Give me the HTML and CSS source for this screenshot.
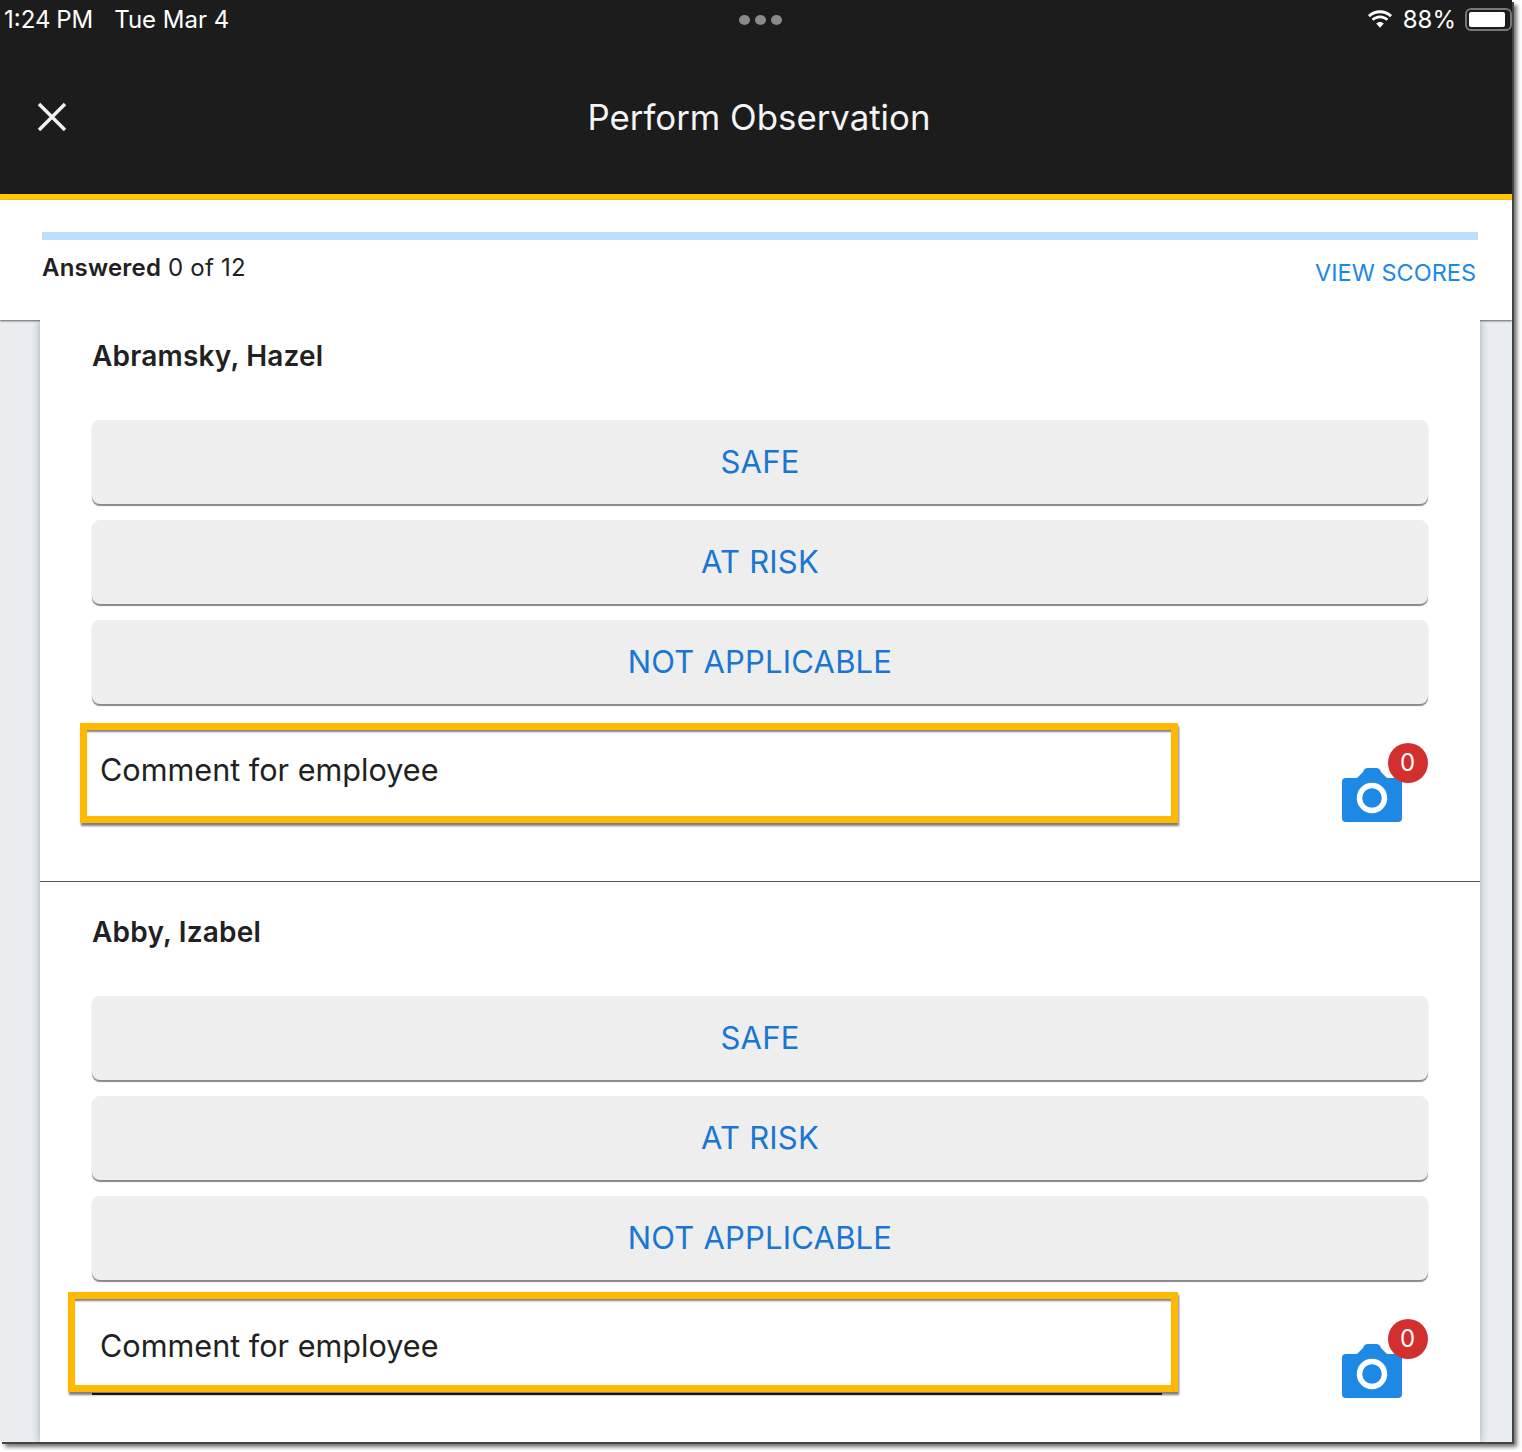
FILE: index.html
```html
<!DOCTYPE html>
<html lang="en">
<head>
<meta charset="utf-8">
<title>Perform Observation</title>
<link rel="stylesheet" href="styles.css">
</head>
<body>
<div class="screen">
  <header class="appbar">
    <div class="status">
      <div class="status-left"><span class="time">1:24 PM</span><span>Tue Mar 4</span></div>
      <div class="dots"><i></i><i></i><i></i></div>
      <div class="status-right">
        <svg class="wifi" width="28" height="20" viewBox="0 0 28 20"><path fill="#fff" d="M14 4.200c3.900 0 7.400 1.500 10.100 4l1.900-2.100C22.800 3.100 18.600 1.200 14 1.200S5.200 3.100 2 6.100l1.900 2.100c2.700-2.500 6.200-4 10.100-4zM14 9.300c2.500 0 4.700.9 6.500 2.500l1.900-2.100c-2.200-2-5.200-3.300-8.400-3.300s-6.200 1.300-8.400 3.300l1.900 2.100c1.800-1.600 4-2.500 6.500-2.500zM14 13c-1.400 0-2.800.6-3.800 1.500l3.800 4.300 3.800-4.300c-1-.9-2.400-1.500-3.800-1.500z"/></svg>
        <span>88%</span>
        <span class="battery"><span class="battery-fill"></span></span>
      </div>
    </div>
    <div class="titlebar">
      <svg class="close" width="30" height="30" viewBox="0 0 30 30"><path d="M2 2 L28 28 M28 2 L2 28" stroke="#f2f2f2" stroke-width="3.400" fill="none"/></svg>
      <h1>Perform Observation</h1>
    </div>
  </header>
  <section class="progress">
    <div class="bar"></div>
    <div class="progress-row">
      <div class="answered"><b>Answered</b> 0 of 12</div>
      <a class="scores">VIEW SCORES</a>
    </div>
  </section>
  <main class="content">
    <div class="card">
      <article class="person first">
        <h2>Abramsky, Hazel</h2>
        <div class="choices">
          <button class="choice">SAFE</button>
          <button class="choice">AT RISK</button>
          <button class="choice">NOT APPLICABLE</button>
        </div>
        <div class="comment-row">
          <div class="comment">Comment for employee</div>
          <div class="photo">
            <svg class="camera" width="60" height="54" viewBox="0 0 60 54"><path fill="#1e88e5" d="M4 10 H15 L21 4 Q22 0 26 0 H34 Q38 0 39 4 L45 10 H56 Q60 10 60 14 V50 Q60 54 56 54 H4 Q0 54 0 50 V14 Q0 10 4 10 Z"/><circle cx="30" cy="30" r="12.500" fill="none" stroke="#fff" stroke-width="5.500"/></svg>
            <span class="badge">0</span>
          </div>
          <div class="highlight highlight-a"></div>
        </div>
      </article>
      <article class="person second">
        <h2>Abby, Izabel</h2>
        <div class="choices">
          <button class="choice">SAFE</button>
          <button class="choice">AT RISK</button>
          <button class="choice">NOT APPLICABLE</button>
        </div>
        <div class="comment-row">
          <div class="comment lined">Comment for employee</div>
          <div class="photo">
            <svg class="camera" width="60" height="54" viewBox="0 0 60 54"><path fill="#1e88e5" d="M4 10 H15 L21 4 Q22 0 26 0 H34 Q38 0 39 4 L45 10 H56 Q60 10 60 14 V50 Q60 54 56 54 H4 Q0 54 0 50 V14 Q0 10 4 10 Z"/><circle cx="30" cy="30" r="12.500" fill="none" stroke="#fff" stroke-width="5.500"/></svg>
            <span class="badge">0</span>
          </div>
          <div class="highlight highlight-b"></div>
        </div>
      </article>
    </div>
  </main>
</div>
</body>
</html>
```
FILE: styles.css
```css
* { box-sizing: border-box; }
html, body { margin: 0; padding: 0; background: #fff; }
body { font-family: Inter, "Noto Sans", sans-serif; width: 1522px; height: 1452px; overflow: hidden; }
.screen {
  width: 1512px; height: 1442px; overflow: hidden; display: flex; flex-direction: column;
  background: #e9edf0;
  box-shadow: 2px 2px 0 #444, 5px 5px 4px rgba(0,0,0,.55);
}
.appbar { height: 200px; flex: none; background: #1c1c1c; border-bottom: 6px solid #ffc800; color: #fff; }
.status { height: 40px; padding: 0 0 2px 4px; display: flex; align-items: center; justify-content: space-between; position: relative; font-size: 24px; }
.status-left { display: flex; gap: 21px; }
.time { word-spacing: -1px; }
.dots { position: absolute; left: 739px; top: 15px; display: flex; gap: 5px; }
.dots i { width: 11px; height: 10px; border-radius: 50%; background: #8a8a8a; }
.status-right { display: flex; align-items: center; gap: 9px; }
.battery { width: 47px; height: 23px; border: 2px solid #777; border-radius: 6px; padding: 2px 5px 2px 2px; display: block; }
.battery-fill { display: block; width: 100%; height: 100%; background: #fff; border-radius: 2px; }
.titlebar { height: 154px; position: relative; display: flex; align-items: center; justify-content: center; }
.titlebar h1 { margin: 0; font-weight: 400; font-size: 34.800px; color: #f4f4f4; position: relative; left: 3px; }
.close { position: absolute; left: 37px; top: 62px; }
.progress { height: 120px; flex: none; background: #fff; padding: 32px 34px 0 42px; position: relative; box-shadow: 0 1px 2px rgba(0,0,0,.6); z-index: 1; }
.bar { height: 8px; background: #bbdefb; }
.progress-row { display: flex; justify-content: space-between; }
.answered { font-size: 24px; color: #212121; padding: 13px 0 0; line-height: 30px; letter-spacing: .2px; }
.answered b { font-weight: 600; }
.scores { font-size: 23.500px; color: #1e88e5; padding: 18px 2px 0 0; line-height: 30px; }
.content { flex: 1; min-height: 0; padding: 0 32px 0 40px; }
.card { width: 1440px; background: #fff; height: 100%; position: relative; z-index: 2; box-shadow: 0 0 8px rgba(0,0,0,.3); clip-path: inset(0 -12px 0 -12px); }
.person { padding: 0 52px; }
.person.first { height: 562px; border-bottom: 1px solid #555; }
.person h2 { margin: 0; padding: 18px 0 0; height: 100px; font-size: 28px; line-height: 36px; font-weight: 600; color: #212121; letter-spacing: .2px; }
.person.second h2 { padding-top: 32px; height: 114px; }
.choices { display: flex; flex-direction: column; gap: 16px; }
.choice {
  height: 84px; width: 100%; border: 0; border-radius: 8px; background: #eee; color: #1976d2;
  font: 400 31px Inter, sans-serif; letter-spacing: .2px; padding: 0 0 2px; box-shadow: 0 2px 1px #888;
}
.comment-row { position: relative; display: flex; justify-content: space-between; padding-top: 19px; }
.comment { width: 1070px; height: 100px; padding: 27px 9px 0 8px; font-size: 30.600px; line-height: 40px; color: #212121; }
.comment.lined { border-bottom: 2px solid #222; height: 96px; }
.photo { position: relative; width: 86px; height: 100px; }
.camera { position: absolute; left: 0; top: 45px; }
.badge { position: absolute; left: 46px; top: 20px; width: 40px; height: 40px; border-radius: 50%; background: #d32f2f; color: #fff; font-size: 24px; line-height: 40px; text-align: center; padding-right: 1px; }
.highlight { position: absolute; border: 7px solid #ffb900; box-shadow: 1px 3px 2px rgba(0,0,0,.5), inset 0 3px 2px -1px rgba(0,0,0,.5); pointer-events: none; }
.highlight-a { left: -12px; top: 19px; width: 1098px; height: 100px; }
.highlight-b { left: -24px; top: 12px; width: 1110px; height: 100px; }
```
